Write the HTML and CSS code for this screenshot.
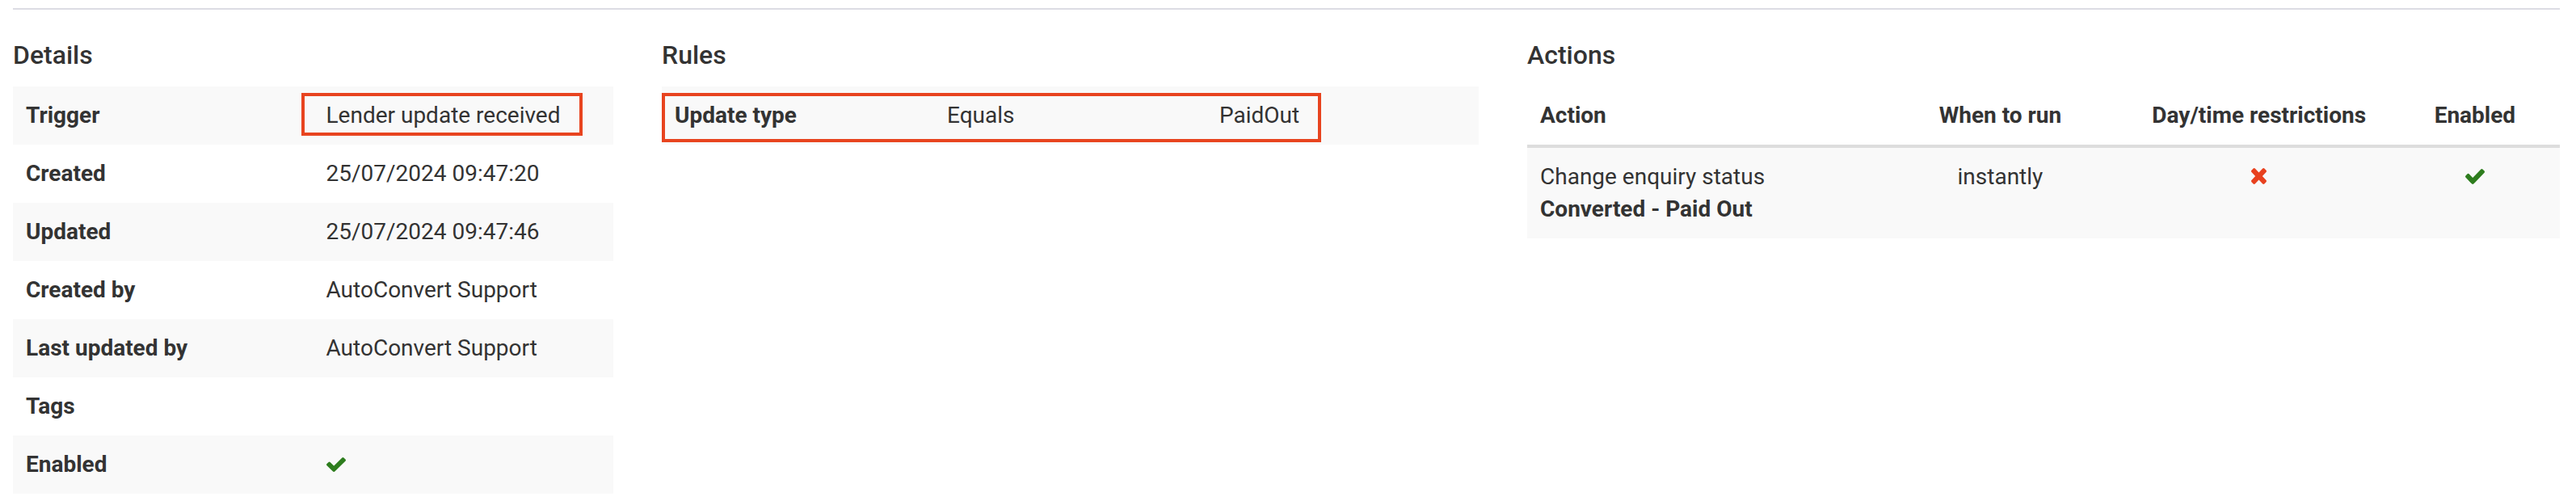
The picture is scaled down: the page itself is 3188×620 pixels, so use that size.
FILE: index.html
```html
<!DOCTYPE html>
<html lang="en">
<head>
<meta charset="utf-8">
<title>Automation details</title>
<link rel="stylesheet" href="styles.css">
</head>
<body>
<div class="page">
  <div class="divider"></div>
  <div class="columns">
    <section class="panel">
      <h4 class="section-title">Details</h4>
      <table class="table striped details">
        <tbody>
          <tr><th>Trigger</th><td class="marked"><span class="highlight"></span>Lender update received</td></tr>
          <tr><th>Created</th><td>25/07/2024 09:47:20</td></tr>
          <tr><th>Updated</th><td>25/07/2024 09:47:46</td></tr>
          <tr><th>Created by</th><td>AutoConvert Support</td></tr>
          <tr><th>Last updated by</th><td>AutoConvert Support</td></tr>
          <tr><th>Tags</th><td></td></tr>
          <tr><th>Enabled</th><td><svg class="icon check" width="24" height="18" viewBox="121 334 1550 1188" preserveAspectRatio="none"><path d="M1671 566q0 40-28 68l-724 724-136 136q-28 28-68 28t-68-28l-136-136-362-362q-28-28-28-68t28-68l136-136q28-28 68-28t68 28l294 295 656-657q28-28 68-28t68 28l136 136q28 28 28 68z"/></svg></td></tr>
        </tbody>
      </table>
    </section>

    <section class="panel">
      <h4 class="section-title">Rules</h4>
      <div class="rules-wrap">
        <table class="table striped rules">
          <tbody>
            <tr><th>Update type</th><td>Equals</td><td>PaidOut</td></tr>
          </tbody>
        </table>
        <span class="highlight rules-highlight"></span>
      </div>
    </section>

    <section class="panel">
      <h4 class="section-title">Actions</h4>
      <table class="table actions">
        <colgroup>
          <col class="c-action"><col class="c-when"><col class="c-day"><col class="c-enabled">
        </colgroup>
        <thead>
          <tr>
            <th>Action</th>
            <th class="center">When to run</th>
            <th class="center">Day/time restrictions</th>
            <th class="center">Enabled</th>
          </tr>
        </thead>
        <tbody>
          <tr>
            <td>Change enquiry status<br><strong>Converted - Paid Out</strong></td>
            <td class="center">instantly</td>
            <td class="center"><svg class="icon cross" width="19" height="20" viewBox="110 366 1188 1188" preserveAspectRatio="none"><path d="M1298 1322q0 40-28 68l-136 136q-28 28-68 28t-68-28l-294-294-294 294q-28 28-68 28t-68-28l-136-136q-28-28-28-68t28-68l294-294-294-294q-28-28-28-68t28-68l136-136q28-28 68-28t68 28l294 294 294-294q28-28 68-28t68 28l136 136q28 28 28 68t-28 68l-294 294 294 294q28 28 28 68z"/></svg></td>
            <td class="center"><svg class="icon check" width="24" height="19" viewBox="121 334 1550 1188" preserveAspectRatio="none"><path d="M1671 566q0 40-28 68l-724 724-136 136q-28 28-68 28t-68-28l-136-136-362-362q-28-28-28-68t28-68l136-136q28-28 68-28t68 28l294 295 656-657q28-28 68-28t68 28l136 136q28 28 28 68z"/></svg></td>
          </tr>
        </tbody>
      </table>
    </section>
  </div>
</div>
</body>
</html>
```

FILE: styles.css
```css
html, body {
  margin: 0;
  background: #ffffff;
}

body {
  font-family: Roboto, "Liberation Sans", Arial, sans-serif;
  font-size: 28px;
  line-height: 40px;
  color: #333333;
}

.page {
  padding: 10px 20px 0 16px;
}

.divider {
  height: 2px;
  background: #dcdce4;
}

.columns {
  display: grid;
  grid-template-columns: 743px 1011px 1fr;
  column-gap: 60px;
}

.section-title {
  font-size: 32px;
  font-weight: 500;
  line-height: 36px;
  margin: 38px 0 21px;
  color: #333333;
}

.table {
  width: 100%;
  border-collapse: collapse;
  border-spacing: 0;
  table-layout: fixed;
}

.table th,
.table td {
  padding: 16px;
  text-align: left;
  vertical-align: top;
  line-height: 40px;
}

.table th {
  font-weight: 700;
}

.striped tr:nth-child(odd) th,
.striped tr:nth-child(odd) td {
  background: #f9f9f9;
}

.marked {
  position: relative;
}

.highlight {
  position: absolute;
  box-sizing: border-box;
  border: 4px solid #e8441f;
  left: -15px;
  top: 8px;
  width: 348px;
  height: 53px;
}

.rules-wrap {
  position: relative;
}

.rules-highlight {
  left: 0;
  top: 8px;
  width: 816px;
  height: 61px;
}

.actions .c-action { width: 427px; }
.actions .c-when { width: 316px; }
.actions .c-day { width: 324px; }
.actions .c-enabled { width: 210px; }

.actions thead th {
  vertical-align: bottom;
  border-bottom: 4px solid #dddddd;
}

.actions tbody td {
  background: #f9f9f9;
}

.actions strong {
  font-weight: 700;
}

.center {
  text-align: center !important;
}

.icon {
  display: inline-block;
  vertical-align: 0;
}

.icon.check {
  fill: #2e7d1e;
}

.icon.cross {
  fill: #e8411f;
}
```
